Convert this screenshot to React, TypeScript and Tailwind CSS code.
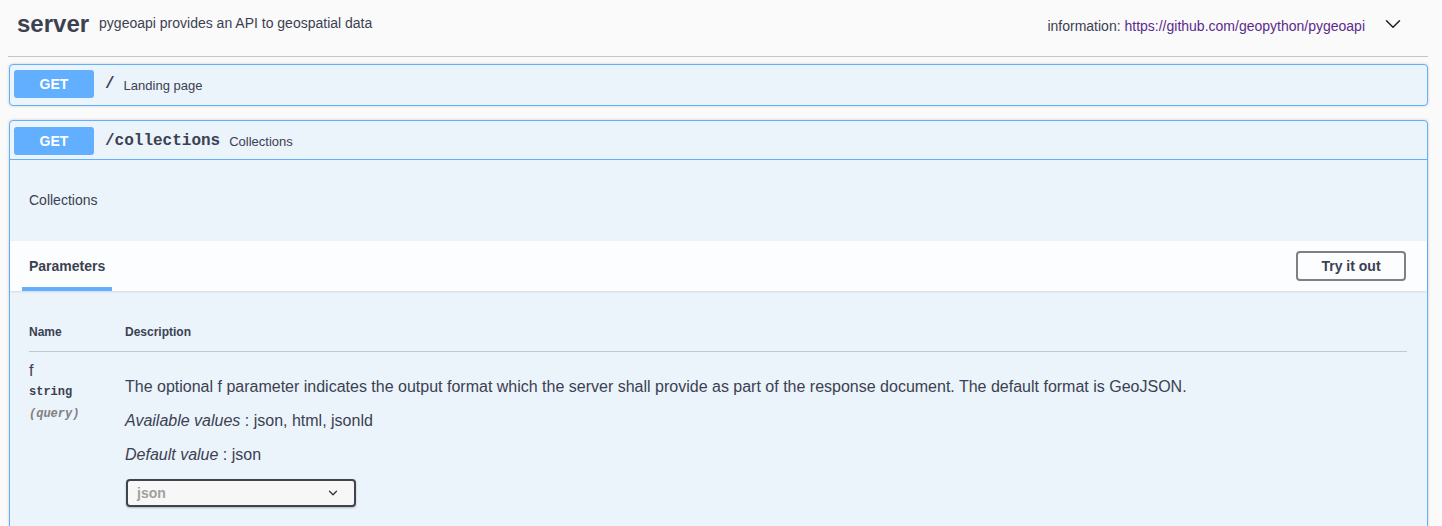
import { ChevronDown } from 'lucide-react';

// Swagger-style API docs: tag header, two GET operations, one expanded

const sans = "font-['Liberation_Sans',Helvetica,Arial,sans-serif]";
const mono = "font-['Liberation_Mono','Courier_New',monospace]";

function GetBadge() {
    return (
        <span className="w-[80px] h-[28px] flex items-center justify-center rounded-[3px] bg-[#61affe] text-white text-[14px] font-bold shrink-0">
            GET
        </span>
    );
}

export default function App() {
    return (
        <div className={`h-[526px] overflow-hidden bg-[#fafafa] text-[#3b4151] pl-[8px] pr-[14px] ${sans}`}>
            {/* Tag header */}
            <div className="h-[57px] border-b border-[#c4c5ca] flex items-start">
                <div className="h-[48px] w-full flex items-center pl-[9px] pr-[22px]">
                    <span className="text-[24px] font-bold leading-none">server</span>
                    <span className="ml-[10px] text-[14px] mt-[-2px]">pygeoapi provides an API to geospatial data</span>
                    <span className="ml-auto text-[14px] mt-[5px]">
                        information: <span className="text-[#5b2a8c]">https://github.com/geopython/pygeoapi</span>
                    </span>
                    <ChevronDown className="ml-[15px] w-[26px] h-[26px] text-[#222]" strokeWidth={1.4} />
                </div>
            </div>

            {/* GET / */}
            <div className="mt-[7px] ml-[1px] border border-[#61affe] rounded-[4px] bg-[#ebf3fb] shadow-[0_0_3px_rgba(0,0,0,0.19)]">
                <div className="flex items-center pl-[4px] pt-[5px] pb-[7px]">
                    <GetBadge />
                    <span className={`ml-[11px] text-[16px] font-bold ${mono}`}>/</span>
                    <span className="ml-[9px] text-[13px] mt-[3px]">Landing page</span>
                </div>
            </div>

            {/* GET /collections (expanded) */}
            <div className="mt-[14px] ml-[1px] border border-[#61affe] rounded-t-[4px] bg-[#ebf3fb] shadow-[0_0_3px_rgba(0,0,0,0.19)]">
                <div className="flex items-center pl-[4px] pt-[6px] pb-[4px] border-b border-[#61affe]">
                    <GetBadge />
                    <span className={`ml-[11px] text-[16px] font-bold ${mono}`}>/collections</span>
                    <span className="ml-[9px] text-[13px] mt-[1px]">Collections</span>
                </div>

                <div className="h-[81px] flex items-center pl-[19px] text-[14px]">Collections</div>

                {/* Parameters header */}
                <div className="h-[50px] bg-[#fcfdfe] shadow-[0_1px_2px_rgba(0,0,0,0.1)] flex items-center pl-[19px] pr-[20px]">
                    <div className="relative">
                        <span className="text-[14px] font-bold">Parameters</span>
                        <span className="absolute left-[-7px] right-[-7px] top-[33px] h-[4px] bg-[#61affe]" />
                    </div>
                    <button className="ml-auto mr-[1px] w-[110px] h-[30px] border-2 border-[#808080] rounded-[4px] text-[14px] font-bold bg-transparent">
                        Try it out
                    </button>
                </div>

                {/* Parameters table */}
                <div className="pt-[32px] pl-[19px] pr-[20px] pb-[60px]">
                    <div className="flex text-[12px] font-bold pb-[10px] border-b border-[#c4c8cf]">
                        <span className="w-[96px]">Name</span>
                        <span>Description</span>
                    </div>
                    <div className="flex pt-[10px]">
                        <div className="w-[96px] flex flex-col">
                            <span className="text-[16px] leading-[18px]">f</span>
                            <span className={`text-[12px] font-bold mt-[3px] ${mono}`}>string</span>
                            <span className={`text-[12px] italic font-bold text-[#808080] mt-[4px] ${mono}`}>(query)</span>
                        </div>
                        <div className="flex flex-col text-[16px] pt-[15px]">
                            <p className="leading-[20px]">
                                The optional f parameter indicates the output format which the server shall provide as part of the response document. The default format is GeoJSON.
                            </p>
                            <p className="leading-[20px] mt-[14px]">
                                <i>Available values</i> : json, html, jsonld
                            </p>
                            <p className="leading-[20px] mt-[14px]">
                                <i>Default value</i> : json
                            </p>
                            <div className="mt-[14px] ml-[1px] w-[230px] h-[28px] border-2 border-[#41444e] rounded-[4px] bg-[#f7f7f7] shadow-[0_1px_2px_rgba(0,0,0,0.25)] flex items-center pl-[9px] pr-[14px]">
                                <span className="text-[14px] font-bold text-[#a0a0a0]">json</span>
                                <ChevronDown className="ml-auto w-[14px] h-[14px] text-[#333]" strokeWidth={2.2} />
                            </div>
                        </div>
                    </div>
                </div>
            </div>
        </div>
    );
}
